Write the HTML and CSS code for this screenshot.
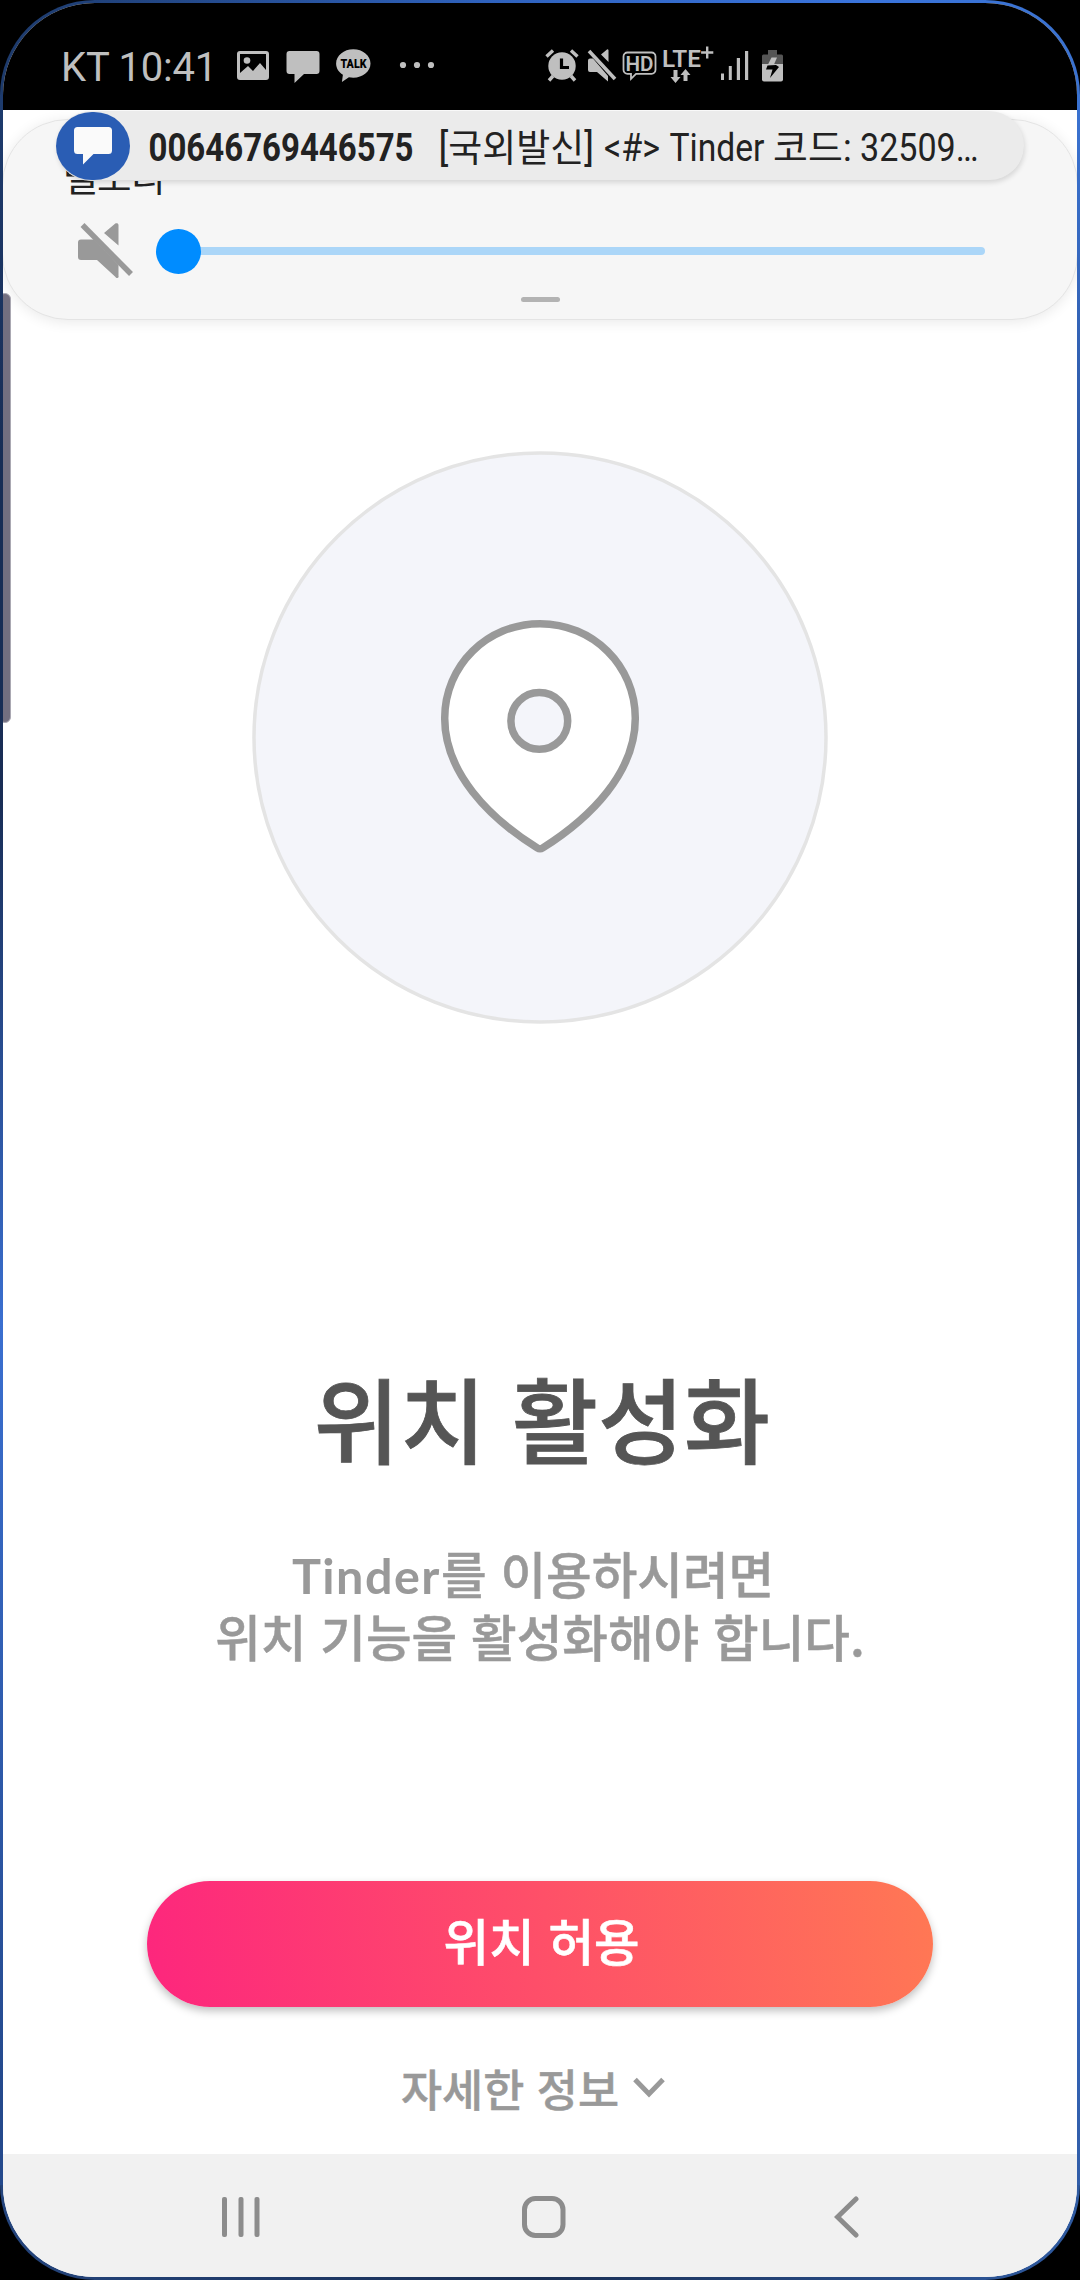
FILE: index.html
```html
<!DOCTYPE html>
<html lang="ko">
<head>
<meta charset="utf-8">
<title>위치 활성화</title>
<link rel="stylesheet" href="styles.css">
</head>
<body>
<div class="device">
<div class="screen">
  <header class="status">
    <span class="carrier">KT 10:41</span>
    <svg class="status-left" width="200" height="40" viewBox="236 45 200 40" fill="#bfbfbf">
      <path fill-rule="evenodd" d="M240 51h26a3 3 0 0 1 3 3v23a3 3 0 0 1-3 3h-26a3 3 0 0 1-3-3V54a3 3 0 0 1 3-3zM240 54v19l8-7 5 5 7-8 6 7V54z"/>
      <circle cx="247" cy="60.500" r="3.300"/>
      <path d="M289.500 51h27a3 3 0 0 1 3 3v17a3 3 0 0 1-3 3H304l-9.500 9V74h-5a3 3 0 0 1-3-3V54a3 3 0 0 1 3-3z"/>
      <path d="M353.300 49.300c9.500 0 17.200 6.300 17.200 14.200s-7.700 14.200-17.200 14.200c-1.500 0-3-.1-4.400-.4l-7 4.700 1-7.200c-4.200-2.600-6.800-6.700-6.800-11.300 0-7.900 7.700-14.200 17.200-14.200z"/>
      <text class="talk" x="340.500" y="68.300" textLength="26" lengthAdjust="spacingAndGlyphs">TALK</text>
      <circle cx="403" cy="65" r="3.100"/><circle cx="417" cy="65" r="3.100"/><circle cx="431" cy="65" r="3.100"/>
    </svg>
    <svg class="status-right" width="242" height="42" viewBox="544 44 242 42" fill="#bfbfbf">
      <circle cx="562" cy="66" r="13.700"/>
      <g fill="none" stroke="#bfbfbf" stroke-width="3.400">
        <path d="M546.500 56.500l6.500-6M577.500 56.500l-6.500-6M553 76l-4 4.500M571 76l4 4.500"/>
        <path stroke="#000" stroke-width="3.200" d="M561.500 58.500v9h7.500"/>
      </g>
      <path d="M590 58.500h3L608 76v5.500L597 72h-7a2 2 0 0 1-2-2v-9.500a2 2 0 0 1 2-2zM607 49.500a1 1 0 0 1 1.500 1V62l-7.500-7.500z"/>
      <path d="M589 51L615 79" fill="none" stroke="#bfbfbf" stroke-width="3.600"/>
      <path d="M592.500 49.500L611 69.500" fill="none" stroke="#000" stroke-width="1.500"/>
      <path fill="none" stroke="#bfbfbf" stroke-width="1.800" d="M627.500 52.500h24a4 4 0 0 1 4 4v13.300a4 4 0 0 1-4 4H636l-5 5v-5h-3.500a4 4 0 0 1-4-4V56.500a4 4 0 0 1 4-4z"/>
      <text class="hd" x="625.500" y="70.500" textLength="28" lengthAdjust="spacingAndGlyphs">HD</text>
      <text class="lte" x="662" y="66.500" textLength="39" lengthAdjust="spacingAndGlyphs">LTE</text>
      <path d="M706 46.500h2.400v4.800h4.900v2.400h-4.900v4.800H706v-4.800h-4.900v-2.400h4.900z"/>
      <path d="M673.500 70h4v7h3l-5 6-5-6h3zM683.500 81h4v-6h3l-5-6-5 6h3z"/>
      <path d="M721 73.500h3V80h-3zM728.800 66h3v14h-3zM736.800 58h3.200v22h-3.200zM745 51h3.200v29H745z"/>
      <path fill="#555" d="M768 50h9v4.500h4.500a1.500 1.500 0 0 1 1.500 1.500v8h-21v-8a1.500 1.500 0 0 1 1.500-1.500h4.500z"/>
      <path d="M762 64h21v15.500a2 2 0 0 1-2 2h-17a2 2 0 0 1-2-2z"/>
      <path fill="#000" d="M767.500 65.500l8.500-.5 3 2-9 11 2.500-8.500H766z"/>
      <path d="M771.500 57.500h5.500l-3 7h-6z"/>
    </svg>
  </header>

  <main class="content">
    <section class="volume-panel">
      <p class="volume-label">벨소리</p>
      <div class="volume-row">
        <svg class="mute" width="58" height="58" viewBox="77 223 58 58" fill="#999">
          <path d="M81 240.500h13L118.500 266v11a1.500 1.500 0 0 1-3 1l-18.500-17H81a3 3 0 0 1-3-3v-14.500a3 3 0 0 1 3-3zM104 234l11-9.300c1.500-1 3.500-.5 3.500 1.500v20.300z"/>
          <path d="M82.500 226L131 275" fill="none" stroke="#999" stroke-width="5.500"/>
        </svg>
        <div class="slider"><span class="knob"></span></div>
      </div>
      <span class="handle"></span>
      <div class="notice">
        <span class="notice-badge">
          <svg width="38" height="38" viewBox="0 0 38 38" fill="#fafafa"><path d="M3.500 0h31A3.500 3.500 0 0 1 38 3.500v20a3.500 3.500 0 0 1-3.500 3.500H19.500L9 37.500V27H3.500A3.500 3.500 0 0 1 0 23.500v-20A3.500 3.500 0 0 1 3.500 0z"/></svg>
        </span>
        <svg class="notice-text" width="832" height="66" viewBox="148 113 832 66">
          <text class="sender" x="148.500" y="161" textLength="265" lengthAdjust="spacingAndGlyphs">00646769446575</text>
          <g class="message">
            <text x="438.500" y="161" textLength="155.500" lengthAdjust="spacingAndGlyphs">[국외발신]</text>
            <text x="604" y="161" textLength="56" lengthAdjust="spacingAndGlyphs">&lt;#&gt;</text>
            <text x="669.500" y="161" textLength="95" lengthAdjust="spacingAndGlyphs">Tinder</text>
            <text x="773" y="161" textLength="79" lengthAdjust="spacingAndGlyphs">코드:</text>
            <text x="860" y="161" textLength="118.500" lengthAdjust="spacingAndGlyphs">32509…</text>
          </g>
        </svg>
      </div>
    </section>
    <span class="edge-handle"></span>

    <svg class="hero" width="576" height="573" viewBox="252 450.500 576 573">
      <ellipse cx="540" cy="737" rx="286" ry="284.500" fill="#f4f5fa" stroke="#e4e4e4" stroke-width="3.500"/>
      <path d="M540 623.200c53 0 95.300 42 95.300 94.600 0 54-44 99-92.500 129.600q-2.800 1.800-5.600 0C488.500 817 444.700 771.800 444.700 717.800c0-52.600 42.300-94.600 95.300-94.600z" fill="#fff" stroke="#999" stroke-width="7.500"/>
      <circle cx="539.300" cy="720.400" r="28.400" fill="#f4f5fa" stroke="#999" stroke-width="7.500"/>
    </svg>

    <h1 class="title">위치 활성화</h1>
    <p class="subtitle"><span class="brand">Tinder</span>를 이용하시려면&nbsp;<br>위치 기능을 활성화해야 합니다.</p>
    <button class="allow">위치 허용</button>
    <a class="more">자세한 정보
      <svg width="32" height="22" viewBox="0 0 32 22" fill="none" stroke="#999" stroke-width="5"><path d="M2 2.500l14 14.500L30 2.500"/></svg>
    </a>
  </main>

  <nav class="navbar">
    <svg width="40" height="42" viewBox="0 0 40 42" fill="#8c8c8c"><rect x="0" y="1" width="5" height="40" rx="2"/><rect x="16.500" y="1" width="5" height="40" rx="2"/><rect x="32.500" y="1" width="5" height="40" rx="2"/></svg>
    <svg class="home" width="44" height="42" viewBox="0 0 44 42" fill="none" stroke="#8c8c8c" stroke-width="5"><rect x="2.500" y="2.500" width="38.500" height="37" rx="11"/></svg>
    <svg width="26" height="42" viewBox="0 0 26 42" fill="none" stroke="#8c8c8c" stroke-width="5" stroke-linecap="round"><path d="M22 3L3.500 21 22 39"/></svg>
  </nav>
</div>
</div>
</body>
</html>
```
FILE: styles.css
```css
* { box-sizing: border-box; }
body { margin: 0; background: #000; font-family: "Noto Sans CJK KR", "Noto Sans", sans-serif; }
svg { display: block; flex: none; }
.device {
  width: 1080px; height: 2280px; padding: 3px; border-radius: 95px;
  background:
    linear-gradient(90deg, #1d3a6b, #2f62bd 45%, #3a74dc 80%, #3a72d0) top / 100% 95px no-repeat,
    linear-gradient(90deg, #24447c, #1b3055 50%, #2f5aa0) bottom / 100% 95px no-repeat,
    linear-gradient(#1f3f74, #182d55 20%, #182d55 35%, #3a6fd0 58%, #24498c 92%) left / 50% 100% no-repeat,
    linear-gradient(#3a72d0 5%, #2c539a 25%, #1b3055 43%, #3a6bc4 57%, #3a6fd0 75%, #2f5aa0) right / 50% 100% no-repeat;
}
.screen {
  height: 2274px; border-radius: 92px; overflow: hidden; background: #fff;
  display: flex; flex-direction: column;
}
.status {
  height: 107px; flex: none; background: #000; color: #bfbfbf;
  display: flex; align-items: flex-start; padding: 41px 0 0 58px;
}
.carrier { font: 400 40px/48px Roboto, sans-serif; width: 175px; letter-spacing: -0.2px; white-space: nowrap; }
.status-left { margin-top: 1px; }
.status-right { margin-left: 108px; }
.talk { font: 900 12.500px Roboto, sans-serif; fill: #000; }
.hd { font: 600 21px Roboto, sans-serif; }
.lte { font: 600 23px Roboto, sans-serif; }

.content { position: relative; flex: 1; display: flex; flex-direction: column; align-items: center; }
.volume-panel {
  position: relative; width: 1076px; height: 201px; margin: 9px -1px 0; flex: none;
  border-radius: 66px; border: 1px solid #e4e4e4; background: #f6f6f6;
  box-shadow: 0 2px 14px rgba(0,0,0,.09);
  display: flex; flex-direction: column; align-items: center;
}
.volume-label { align-self: flex-start; margin: 32px 0 0 60px; font-size: 37.500px; line-height: 46px; color: #222; height: 46px; letter-spacing: -0.5px; }
.volume-row { align-self: stretch; display: flex; align-items: center; margin: 24px 0 0 74px; height: 58px; }
.slider { width: 829px; height: 8px; margin-left: 21px; border-radius: 4px; background: #abd6f8; display: flex; align-items: center; }
.knob { width: 45px; height: 45px; border-radius: 50%; background: #008cff; flex: none; }
.handle { width: 39px; height: 5px; border-radius: 3px; background: #b3b3b3; margin-top: 17px; }
.notice {
  position: absolute; left: 53px; top: -9px; width: 968px; height: 70px; border-radius: 35px;
  background: #ebebeb; border-bottom: 1px solid #dcdcdc; box-shadow: 1px 2px 5px rgba(0,0,0,.12);
  display: flex; align-items: flex-start;
}
.notice-badge { width: 74px; height: 68px; margin-top: 1px; border-radius: 36px / 34px; background: #2a5db4; display: flex; align-items: center; justify-content: center; flex: none; }
.notice-text { margin: 2px 0 0 18px; }
.sender { font: 700 38px Roboto, sans-serif; fill: #222; }
.message { font: 400 38px Roboto, "Noto Sans CJK KR", sans-serif; fill: #222; }
.edge-handle { position: absolute; left: -4px; top: 183px; width: 12px; height: 430px; border-radius: 10px; background: #736f80; border: 1px solid #aaa8b2; }

.hero { margin-top: 131px; }
.title { margin: 323px 0 0 4px; font-size: 93.500px; line-height: 140px; font-weight: 500; color: #555; -webkit-text-stroke: 0.8px #555; }
.subtitle { margin: 54px 0 0; font-size: 49.600px; line-height: 63px; font-weight: 500; color: #999; text-align: center; -webkit-text-stroke: 0.5px #999; }
.brand { font: 700 48.500px/1 Lato, sans-serif; letter-spacing: 1.5px; -webkit-text-stroke: 0; }
.allow {
  margin: 214px 0 0; width: 786px; height: 126px; border: 0; border-radius: 63px; padding: 0 0 9px 3px;
  background: linear-gradient(82deg, #fd267d, #ff7854); box-shadow: 0 4px 8px rgba(0,0,0,.25);
  color: #fff; font: 500 49.500px/70px "Noto Sans CJK KR", sans-serif; -webkit-text-stroke: 0.6px #fff;
}
.more { margin: 49px 14px 0 0; display: flex; align-items: center; gap: 14px; font-size: 44.700px; line-height: 64px; font-weight: 500; color: #999; -webkit-text-stroke: 0.5px #999; }
.navbar { height: 123px; flex: none; background: #f1f1f1; display: flex; align-items: flex-start; padding: 42px 217px 0 219px; justify-content: space-between; }
.home { margin-right: 9px; }
```
